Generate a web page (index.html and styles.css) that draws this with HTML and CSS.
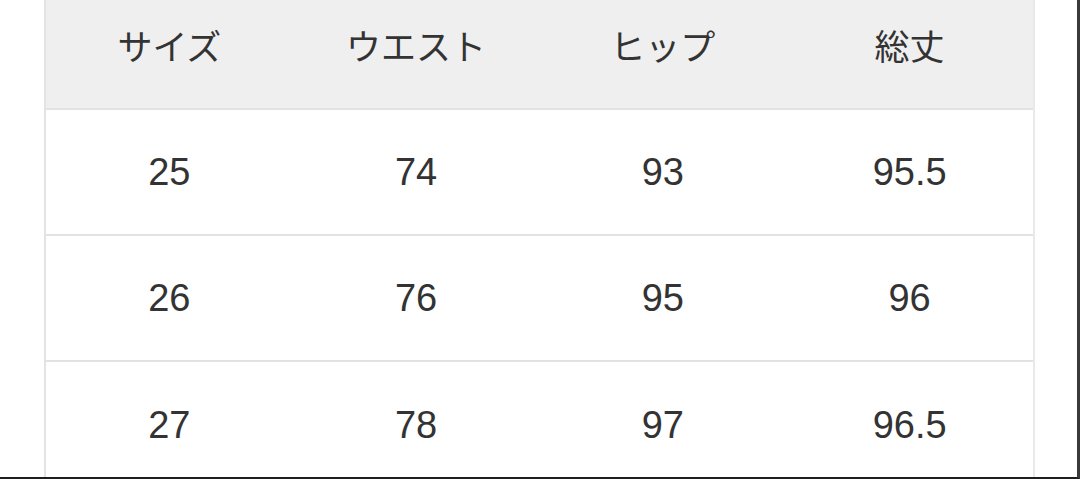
FILE: index.html
```html
<!DOCTYPE html>
<html lang="ja">
<head>
<meta charset="utf-8">
<link rel="stylesheet" href="styles.css">
</head>
<body>
<div class="frame">
  <div class="table">
    <div class="row head">
      <div class="cell">サイズ</div>
      <div class="cell">ウエスト</div>
      <div class="cell">ヒップ</div>
      <div class="cell">総丈</div>
    </div>
    <div class="row body">
      <div class="cell">25</div>
      <div class="cell">74</div>
      <div class="cell">93</div>
      <div class="cell">95.5</div>
    </div>
    <div class="row body">
      <div class="cell">26</div>
      <div class="cell">76</div>
      <div class="cell">95</div>
      <div class="cell">96</div>
    </div>
    <div class="row body last">
      <div class="cell">27</div>
      <div class="cell">78</div>
      <div class="cell">97</div>
      <div class="cell">96.5</div>
    </div>
  </div>
</div>
</body>
</html>
```
FILE: styles.css
```css
html, body {
  margin: 0;
  padding: 0;
  background: #ffffff;
}
body {
  width: 1080px;
  height: 479px;
  overflow: hidden;
}
.frame {
  box-sizing: border-box;
  width: 1080px;
  height: 479px;
  padding-left: 44px;
  border-right: 3px solid #3a3a3a;
  border-bottom: 2px solid #1e1e1e;
  overflow: hidden;
}
.table {
  width: 991px;
  height: 100%;
  border-left: 2px solid #e3e3e3;
  border-right: 2px solid #e9e9e9;
  box-sizing: border-box;
}
.row {
  display: grid;
  grid-template-columns: repeat(4, 1fr);
  border-bottom: 2px solid #e2e2e2;
}
.row.last {
  border-bottom: none;
}
.cell {
  display: flex;
  align-items: center;
  justify-content: center;
  color: #333333;
}
.head {
  background: #efefef;
  height: 110px;
  box-sizing: border-box;
}
.head .cell {
  font-family: "Noto Sans CJK JP", "Noto Sans", sans-serif;
  font-size: 35px;
  padding-bottom: 19px;
}
.body {
  height: 126px;
  box-sizing: border-box;
}
.body .cell {
  font-family: "Liberation Sans", Arial, sans-serif;
  font-size: 38px;
}
.body.last .cell {
  padding-bottom: 0;
}
```
